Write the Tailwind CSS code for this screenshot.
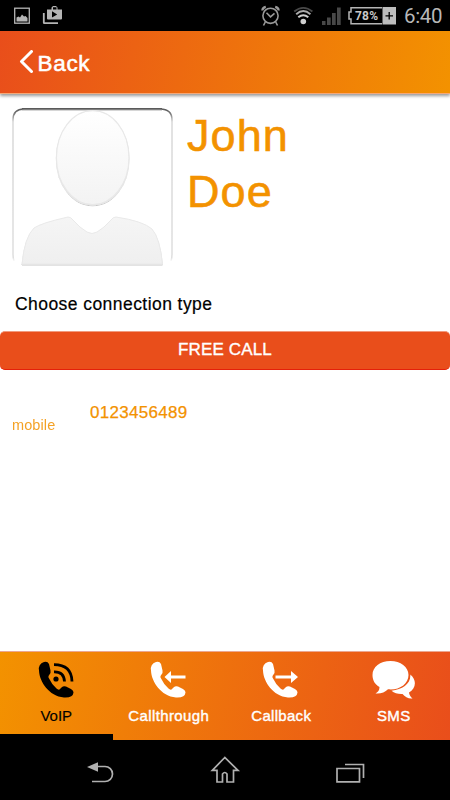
<!DOCTYPE html>
<html lang="en">
<head>
<meta charset="utf-8">
<title>John Doe</title>
<script src="https://cdn.jsdelivr.net/npm/@tailwindcss/browser@4"></script>
</head>
<body class="w-[450px] h-[800px] overflow-hidden bg-white flex flex-col font-['Liberation_Sans',Arial,sans-serif]">
  <!-- Status bar -->
  <div class="h-[31px] shrink-0 bg-black flex items-center">
    <svg class="w-full h-[31px]" viewBox="0 0 450 31" fill="none">
      <rect x="14.7" y="8.2" width="14.6" height="15" stroke="#b5b5b5" stroke-width="1.3"/>
      <path d="M16.500 21.500v-4l2-1 1.500 1 2-3 2 2 1.500-.5 2 2v3.500z" fill="#b5b5b5"/>
      <path d="M43.800 13v9.700q0 .5.500.500H58" stroke="#b5b5b5" stroke-width="1.800"/>
      <path d="M47 9.500h4.500V7.500l1.500-1.500h3l1.500 1.500v2H62v9q0 1-1 1H48q-1 0-1-1zM53 9.500h3.500V7.300H53zM52 11.300v6.200l5.200-3.100z" fill="#b5b5b5" fill-rule="evenodd"/>
      <g stroke="#999" stroke-width="1.600">
        <circle cx="270.500" cy="15.800" r="7.600"/>
        <path d="M266.500 12.800l4 4 4-3.500M265.300 22l-1.800 3.500M275.700 22l1.800 3.500" />
        <path d="M262.300 10.500q.3-3 3.500-3.600M278.700 10.500q-.3-3-3.500-3.600" stroke-width="2.200"/>
      </g>
      <circle cx="303.300" cy="21.500" r="2.800" fill="#d0d0d0"/>
      <path d="M298.300 17.300q5-4.200 10 0" stroke="#d0d0d0" stroke-width="2"/>
      <path d="M296.200 14.200q7.100-6.200 14.200 0" stroke="#aaa" stroke-width="1.900"/>
      <path d="M294.200 11.500q9.100-7.300 18.200 0" stroke="#484848" stroke-width="1.800"/>
      <path d="M322 21h3.500v4H322zM327 17.500h3.700V25H327zM332 13h3.700v12H332zM337 7.500h3.700V25H337z" fill="#484848"/>
      <path d="M382 7.800H351v4.200h-2v7h2v4.700h31" stroke="#b5b5b5" stroke-width="1.500"/>
      <rect x="382.500" y="7" width="13.500" height="17.500" fill="#bdbdbd"/>
      <path d="M385.500 15.800h7.500M389.200 12v7.500" stroke="#000" stroke-width="1.300"/>
      <text x="355" y="20" font-family="Roboto, sans-serif" font-size="12" font-weight="700" textLength="23" fill="#c8c8c8">78%</text>
      <text x="404" y="23" font-family="Roboto, sans-serif" font-size="20.500" textLength="38.500" fill="#b8b8b8">6:40</text>
    </svg>
  </div>
  <!-- Header -->
  <header class="h-[63px] shrink-0 bg-linear-[100deg,#e94e1b,#f39200] border-b border-[#f5a878] shadow-[0_2px_3px_rgba(0,0,0,0.4)] flex items-center pl-[19px] text-white">
    <svg class="w-[15px] h-6" viewBox="0 0 15 24" fill="none"><path d="M12.500 1.500L2.500 11.500 12.500 21.500" stroke="#fff" stroke-width="3" stroke-linecap="round" stroke-linejoin="round"/></svg>
    <span class="ml-[3.500px] mt-[3px] text-[22.500px] leading-7 tracking-[0.7px] [-webkit-text-stroke:0.55px_white]">Back</span>
  </header>
  <main class="flex-1 flex flex-col">
    <section class="flex pl-3 pt-[13px] h-[186px]">
      <svg class="w-[162px] h-[166px] shrink-0" viewBox="12 107 162 166" fill="none">
        <defs>
          <linearGradient id="head" x1="0" y1="0" x2="0" y2="1"><stop stop-color="#fff"/><stop offset="1" stop-color="#f3f3f3"/></linearGradient>
          <linearGradient id="body" x1="0" y1="0" x2="0" y2="1"><stop stop-color="#f5f5f5"/><stop offset="1" stop-color="#efefef"/></linearGradient>
          <linearGradient id="rim" x1="0" y1="108" x2="0" y2="262" gradientUnits="userSpaceOnUse"><stop stop-color="#555"/><stop offset=".035" stop-color="#777"/><stop offset=".09" stop-color="#d8d8d8"/><stop offset=".97" stop-color="#dedede"/><stop offset="1" stop-color="#fff"/></linearGradient>
          <filter id="drop" x="-10%" y="-10%" width="120%" height="120%"><feDropShadow dx="0" dy="1" stdDeviation=".6" flood-opacity=".22"/></filter>
        </defs>
        <path d="M14 261q-1-3-1-7V120q0-11 11-11h136q12 0 12 11v134q0 4-1 7" stroke="url(#rim)" stroke-width="1.500"/>
        <path d="M22 108.700H162" stroke="#5a5a5a" stroke-width="1.500"/>
        <path d="M22 110H162" stroke="#999" stroke-width=".8"/>
        <ellipse cx="92.700" cy="157.700" rx="36.300" ry="47" fill="url(#head)" stroke="#e8e8e8" stroke-width="1.200" filter="url(#drop)"/>
        <path d="M22 264q2.500-27 12-36 7-5 34-11 3 0 5 3 7 8 14 12 5 3 10 0 7-4 14-12 2-3 5-3 27 4 36 12 8 9 10.500 35z" fill="url(#body)" stroke="#e9e9e9" stroke-width="1" filter="url(#drop)"/>
      </svg>
      <h1 class="ml-[13px] mt-px w-[130px] text-[45px] leading-[56px] tracking-[1.100px] text-[#f39200] [-webkit-text-stroke:0.6px_#f39200]">John<br>Doe</h1>
    </section>
    <p class="pl-[15px] mt-[12px] h-[39px] text-[17.500px] leading-6 tracking-[0.440px] text-black [-webkit-text-stroke:0.2px_black]">Choose connection type</p>
    <button class="h-[39px] w-full shrink-0 rounded-[5px] bg-[#e94e1b] border-t border-b border-t-[#f19a7e] border-b-[#e5200a] text-white text-[17px] leading-[34px] pb-[2px] tracking-[0.15px] [-webkit-text-stroke:0.35px_white]">FREE CALL</button>
    <div class="flex pl-3 pt-[31px] text-[#f39200]">
      <span class="w-[78px] pt-[14px] text-[14.500px] leading-5 tracking-[0.1px] font-light opacity-85">mobile</span>
      <span class="text-[17px] leading-6 tracking-[0.3px] [-webkit-text-stroke:0.25px_#f39200]">0123456489</span>
    </div>
  </main>
  <!-- Connection tabs -->
  <nav class="h-[89px] shrink-0 grid grid-cols-4 bg-linear-[100deg,#f39200,#e94e1b] border-t border-[#eba791] text-white text-[15px] leading-5 text-center">
    <div class="flex flex-col items-center pt-2 border-b-[6px] border-black text-black">
      <svg class="w-[38px] h-10" viewBox="0 0 38 40"><g transform="translate(1 0)"><path id="phone" d="M6 2Q0 4 1 10.500C1.500 22 11 36 26 37.500Q35 38 35.500 32.500 35.700 30.500 33 29L28 26.500Q25.500 25.500 23.500 27.500L21.500 29.500Q20 30 18.500 28.500 13.500 24 10.500 17.500 10 16 11.500 14.500 13 13 12.500 10.500L11 4Q9.500 1 6 2Z" fill="currentColor"/><circle cx="18" cy="19" r="2.600" fill="currentColor"/><path d="M16 11.800Q26 11.500 26.500 21.500M16 4.700Q33.500 4.700 34 21.500" fill="none" stroke="currentColor" stroke-width="2.800"/></g></svg>
      <span class="mt-[6px] [-webkit-text-stroke:0.15px_black]">VoIP</span>
    </div>
    <div class="flex flex-col items-center pt-2">
      <svg class="w-[38px] h-10" viewBox="0 0 38 40"><use href="#phone"/><path d="M14.500 17l6.500-6v4.500h14.500v3H21V23z" fill="currentColor"/></svg>
      <span class="mt-[6px] [-webkit-text-stroke:0.4px_white] tracking-[0.4px]">Callthrough</span>
    </div>
    <div class="flex flex-col items-center pt-2">
      <svg class="w-[38px] h-10" viewBox="0 0 38 40"><use href="#phone"/><path d="M13.500 15.500H29V11l7 6-7 6v-4.500H13.500z" fill="currentColor"/></svg>
      <span class="mt-[6px] [-webkit-text-stroke:0.4px_white] tracking-[0.3px]">Callback</span>
    </div>
    <div class="flex flex-col items-center pt-2">
      <svg class="w-[44px] h-10" viewBox="0 0 44 40" fill="#fff"><path d="M18.500 1C8 1 .5 7 .5 15c0 5.500 2.500 9.500 7 12 0 3.500-1.500 5-4 6.500 5 .5 9.500-1 12.500-4.200 11 1.200 20.500-5 20.500-14.300C36.500 7 28.500 1 18.500 1z"/><path d="M38.300 14.500c7 6 5.500 14-1.300 18 .3 2.500 1.500 4.300 3.500 6-4 .5-7.500-1.500-10-4.500-4.500.2-8-.7-11-3.200C30.500 29.500 39 24 38.300 14.500z"/></svg>
      <span class="mt-[6px] [-webkit-text-stroke:0.4px_white] tracking-[0.3px]">SMS</span>
    </div>
  </nav>
  <!-- System navigation -->
  <div class="h-[60px] shrink-0 bg-black flex items-center">
    <svg class="w-full h-[60px]" viewBox="0 740 450 60" fill="none" stroke="#b0b0b0" stroke-width="1.700">
      <path d="M97 766.500h8a7.500 7.500 0 0 1 0 15H92"/>
      <path d="M87 767l11-4.800v9.600z" fill="#b0b0b0" stroke="none"/>
      <path d="M224.800 757.500l-12.500 12.800h4.700V782h5.500v-8q2.300-3 4.500 0v8h6.500v-11.700h4.500z"/>
      <path d="M337 768.500h22.500v13.300H337zM345 764.500h18.500V778"/>
    </svg>
  </div>
</body>
</html>
